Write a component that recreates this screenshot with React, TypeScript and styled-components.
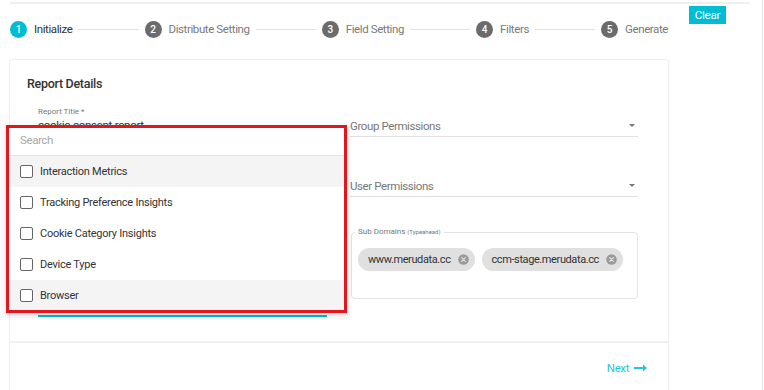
import React from "react";
import styled, { createGlobalStyle } from "styled-components";

const Global = createGlobalStyle`
  html, body { margin: 0; padding: 0; background: #fff; }
  body { font-family: Roboto, "Noto Sans", Arial, sans-serif; color: #333; }
  * { box-sizing: border-box; }
`;

const Page = styled.div`
  position: relative;
  width: 763px;
  height: 390px;
  overflow: hidden;
  border-right: 1px solid #e6e6e6;
`;

const TopRule = styled.div`
  margin: 2px 13px 0 10px;
  height: 2px;
  background: #efefef;
`;

const Header = styled.div`
  display: flex;
  align-items: flex-start;
  padding-left: 10px;
`;

const Stepper = styled.div`
  width: 658px;
  height: 50px;
  display: flex;
  align-items: center;
`;

const Step = styled.div`
  display: flex;
  align-items: center;
  gap: 7px;
`;

const StepCircle = styled.div<{ $active?: boolean }>`
  width: 17px;
  height: 17px;
  border-radius: 50%;
  background: ${(p) => (p.$active ? "#00bcd4" : "#6b6b6b")};
  color: #fff;
  font-size: 10px;
  font-weight: 500;
  display: flex;
  align-items: center;
  justify-content: center;
`;

const StepLabel = styled.span<{ $active?: boolean }>`
  font-size: 11.5px;
  letter-spacing: -0.4px;
  color: ${(p) => (p.$active ? "#333" : "#7a7a7a")};
  white-space: nowrap;
`;

const Connector = styled.div`
  flex: 1;
  height: 1px;
  margin: 0 6px;
  background: #e2e2e2;
`;

const ClearButton = styled.button`
  margin: 2px 0 0 21px;
  width: 37px;
  height: 18px;
  padding: 0;
  border: none;
  background: #00bcd4;
  color: #fff;
  font-family: Roboto, Arial, sans-serif;
  font-size: 11.5px;
  letter-spacing: -0.2px;
  cursor: pointer;
`;

const Card = styled.div`
  position: relative;
  margin: 6px 0 0 10px;
  width: 658px;
  height: 340px;
  background: #fff;
  border-radius: 2px;
  box-shadow: 0 0 0 1px #efefef, 0 1px 3px rgba(0, 0, 0, 0.08);
`;

const CardTitle = styled.div`
  padding: 16px 0 0 17px;
  height: 45px;
  font-size: 12.5px;
  letter-spacing: -0.3px;
  font-weight: 500;
  color: #333;
`;

const FormGrid = styled.div`
  display: grid;
  grid-template-columns: 289px 288px;
  column-gap: 23px;
  padding: 0 0 0 28px;
  height: 212px;
`;

const Column = styled.div`
  display: flex;
  flex-direction: column;
`;

const SmallLabel = styled.div`
  height: 12px;
  font-size: 8px;
  color: #777;
  line-height: 14px;
`;

const TextValue = styled.div`
  height: 21px;
  font-size: 11.5px;
  letter-spacing: -0.3px;
  color: #333;
  line-height: 16px;
  border-bottom: 1px solid #e0e0e0;
`;

const FocusedField = styled.div`
  margin-top: auto;
  height: 22px;
  border-bottom: 2px solid #00bcd4;
`;

const SelectField = styled.div<{ $gap: number }>`
  margin-top: ${(p) => p.$gap}px;
  height: 22px;
  display: flex;
  align-items: center;
  justify-content: space-between;
  padding-right: 3px;
  border-bottom: 1px solid #e0e0e0;
  font-size: 11.5px;
  letter-spacing: -0.4px;
  color: #777;
`;

const Caret = styled.span`
  width: 0;
  height: 0;
  border-left: 3.5px solid transparent;
  border-right: 3.5px solid transparent;
  border-top: 3.5px solid #757575;
`;

const Outlined = styled.fieldset`
  position: relative;
  margin: 35px 0 0 1px;
  padding: 15px 6px 0 6px;
  height: 67px;
  border: 1px solid #e3e3e3;
  border-radius: 4px;
  display: flex;
  align-items: flex-start;
  gap: 7px;
`;

const Legend = styled.span`
  position: absolute;
  top: -6px;
  left: 3px;
  padding: 0 3px;
  background: #fff;
  font-size: 8px;
  color: #777;
  line-height: 10px;
  white-space: nowrap;
  small { font-size: 6px; }
`;

const Chip = styled.div`
  height: 23px;
  border-radius: 12px;
  background: #e0e0e0;
  display: flex;
  align-items: center;
  gap: 7px;
  padding: 0 6px 0 10px;
  font-size: 11px;
  letter-spacing: -0.4px;
  color: #333;
  white-space: nowrap;
`;

const Footer = styled.div`
  position: absolute;
  left: 0;
  right: 0;
  top: 281px;
  bottom: 0;
  border-top: 2px solid #f0f0f0;
  display: flex;
  justify-content: flex-end;
  padding: 18px 21px 0 0;
`;

const NextLink = styled.a`
  display: flex;
  align-items: center;
  gap: 5px;
  height: 14px;
  font-size: 11.5px;
  letter-spacing: -0.4px;
  color: #26c6da;
  cursor: pointer;
`;

const Highlight = styled.div`
  position: absolute;
  left: -4px;
  top: 65px;
  width: 341px;
  height: 188px;
  border: 3px solid #e3161d;
  background: #fff;
  box-shadow: 0 2px 6px rgba(0, 0, 0, 0.18);
  overflow: hidden;
`;

const SearchRow = styled.div`
  height: 28px;
  display: flex;
  align-items: center;
  padding: 0 0 3px 11px;
  border-bottom: 1px solid #e6e6e6;
  font-size: 11.5px;
  letter-spacing: -0.4px;
  color: #a8a8a8;
`;

const Option = styled.div<{ $hover?: boolean }>`
  height: 31px;
  display: flex;
  align-items: center;
  gap: 7px;
  padding-left: 11px;
  background: ${(p) => (p.$hover ? "#f4f4f4" : "#fff")};
  font-size: 11px;
  letter-spacing: -0.25px;
  color: #333;
`;

const Box = styled.span`
  width: 13px;
  height: 13px;
  border: 1.5px solid #666;
  border-radius: 2px;
  background: #fff;
`;

const CancelIcon = () => (
  <svg width="11" height="11" viewBox="0 0 24 24">
    <circle cx="12" cy="12" r="11.5" fill="#9a9a9a" />
    <path d="M8 8l8 8M16 8l-8 8" stroke="#e0e0e0" strokeWidth="2.8" strokeLinecap="round" />
  </svg>
);

const ArrowIcon = () => (
  <svg width="13" height="8" viewBox="0 0 13 8">
    <path d="M0 4h10" stroke="#26c6da" strokeWidth="2" />
    <path d="M9 0.5L13 4L9 7.5Z" fill="#26c6da" />
  </svg>
);

const steps = ["Initialize", "Distribute Setting", "Field Setting", "Filters", "Generate"];
const options = [
  "Interaction Metrics",
  "Tracking Preference Insights",
  "Cookie Category Insights",
  "Device Type",
  "Browser",
];

export default function App() {
  return (
    <Page>
      <Global />
      <TopRule />
      <Header>
        <Stepper>
          {steps.map((s, i) => (
            <React.Fragment key={s}>
              {i > 0 && <Connector />}
              <Step>
                <StepCircle $active={i === 0}>{i + 1}</StepCircle>
                <StepLabel $active={i === 0}>{s}</StepLabel>
              </Step>
            </React.Fragment>
          ))}
        </Stepper>
        <ClearButton>Clear</ClearButton>
      </Header>
      <Card>
        <CardTitle>Report Details</CardTitle>
        <FormGrid>
          <Column>
            <SmallLabel>Report Title *</SmallLabel>
            <TextValue>cookie-consent-report</TextValue>
            <FocusedField />
          </Column>
          <Column>
            <SelectField $gap={10}>
              <span>Group Permissions</span>
              <Caret />
            </SelectField>
            <SelectField $gap={38}>
              <span>User Permissions</span>
              <Caret />
            </SelectField>
            <Outlined>
              <Legend>
                Sub Domains <small>(Typeahead)</small>
              </Legend>
              <Chip>
                www.merudata.cc
                <CancelIcon />
              </Chip>
              <Chip>
                ccm-stage.merudata.cc
                <CancelIcon />
              </Chip>
            </Outlined>
          </Column>
        </FormGrid>
        <Footer>
          <NextLink>
            Next
            <ArrowIcon />
          </NextLink>
        </Footer>
        <Highlight>
          <SearchRow>Search</SearchRow>
          {options.map((o, i) => (
            <Option key={o} $hover={i === 0 || i === 4}>
              <Box />
              {o}
            </Option>
          ))}
        </Highlight>
      </Card>
    </Page>
  );
}
